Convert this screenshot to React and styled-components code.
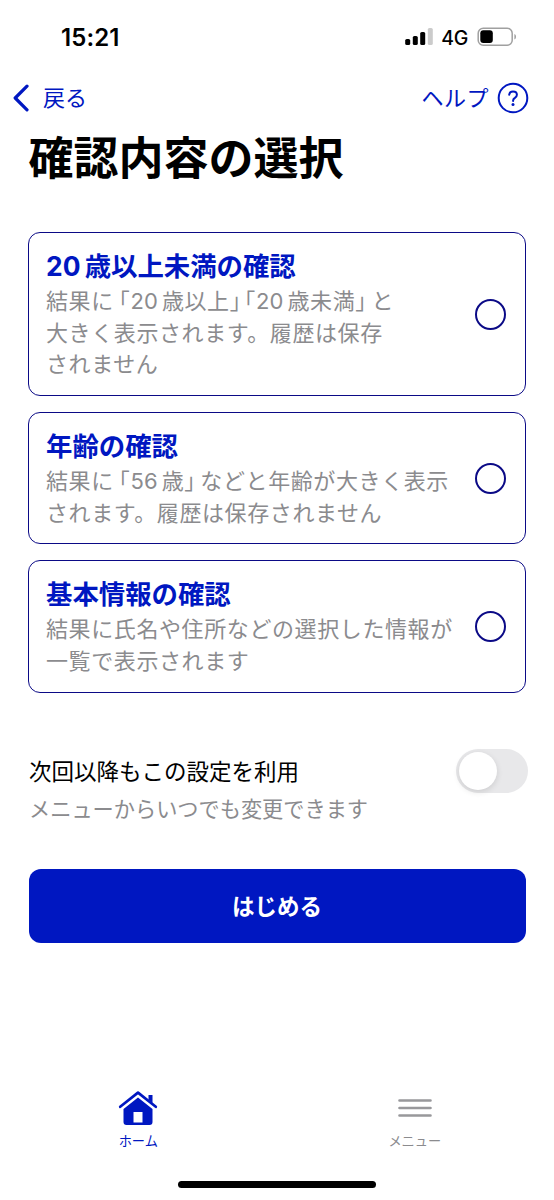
import { useState } from 'react';
import styled, { createGlobalStyle } from 'styled-components';

const colors = {
    primary: '#0017c1',
    navy: '#0b0a86',
    gray: '#8b8b8e',
};

const GlobalStyle = createGlobalStyle`
    * {
        box-sizing: border-box;
    }
    body {
        margin: 0;
        background-color: white;
    }
`;

const Screen = styled.div`
    display: flex;
    flex-direction: column;
    width: 554px;
    height: 1200px;
    overflow: hidden;
    background-color: white;
    color: black;
    font-family: Inter, "Noto Sans CJK JP", sans-serif;
    white-space: nowrap;
`;

const StatusBar = styled.div`
    display: flex;
    align-items: center;
    height: 74px;
    padding: 0 37px 0 61px;
`;

const Clock = styled.div`
    flex-grow: 1;
    font-size: 24px;
    font-weight: 600;
    letter-spacing: 0.1px;
`;

const Network = styled.div`
    margin: 1px 9px 0 8px;
    font-size: 19.5px;
    font-weight: 500;
    letter-spacing: -0.3px;
`;

const NavBar = styled.div`
    display: flex;
    justify-content: space-between;
    height: 48px;
    padding: 0 25px 0 13px;
    color: ${colors.primary};
`;

const NavButton = styled.div`
    display: flex;
    align-items: center;
    gap: ${props => props.$gap}px;
    font-size: 22px;
    line-height: 32px;
    letter-spacing: ${props => props.$spacing || 0}px;
    cursor: pointer;
`;

const Title = styled.h1`
    margin: 0 0 43px;
    padding: 0 28.5px;
    height: 67px;
    font-size: 45px;
    line-height: 74px;
    font-weight: 700;
`;

const CardList = styled.div`
    display: flex;
    flex-direction: column;
    gap: 16px;
    padding: 0 28px;
`;

const Card = styled.div`
    display: flex;
    align-items: center;
    justify-content: space-between;
    height: ${props => props.$lines === 3 ? 164 : 132.4}px;
    padding: 0 19px 0 17px;
    border: 1.5px solid ${colors.navy};
    border-radius: 12px;
    cursor: pointer;
`;

const CardTitle = styled.div`
    height: 39px;
    font-size: 26.4px;
    line-height: 39px;
    font-weight: 700;
    color: ${colors.primary};
`;

const CardLine = styled.div`
    height: 31.7px;
    font-size: 22px;
    line-height: 31.7px;
    letter-spacing: 0.6px;
    font-weight: 400;
    color: ${colors.gray};
`;

const Digits = styled.span`
    margin-right: 4px;
    letter-spacing: 0.1px;
`;

const Bracket = styled.span`
    margin-left: ${props => props.$before || 0}px;
    margin-right: ${props => props.$after || 0}px;
    font-feature-settings: "halt";
`;

const Radio = styled.div`
    flex-shrink: 0;
    width: 31px;
    height: 31px;
    border: 2.5px solid ${colors.navy};
    border-radius: 50%;
    background: ${props => props.$checked ? colors.navy : 'white'};
    box-shadow: inset 0 0 0 4px white;
`;

const SettingRow = styled.div`
    display: flex;
    align-items: flex-start;
    justify-content: space-between;
    margin-top: 56px;
    padding: 0 26px 0 29px;
    height: 120px;
`;

const SettingLabel = styled.div`
    height: 42px;
    font-size: 22.5px;
    line-height: 45px;
`;

const SettingHint = styled.div`
    font-size: 21.2px;
    line-height: 37px;
    color: ${colors.gray};
`;

const Toggle = styled.div`
    display: flex;
    justify-content: ${props => props.$on ? 'flex-end' : 'flex-start'};
    width: 72px;
    height: 44px;
    padding: 3px;
    border-radius: 22px;
    background-color: ${props => props.$on ? colors.primary : '#e8e8ea'};
    cursor: pointer;
`;

const Knob = styled.div`
    width: 38px;
    height: 38px;
    border-radius: 50%;
    background-color: white;
    box-shadow: 0 2px 6px rgba(0, 0, 0, 0.12);
`;

const StartButton = styled.div`
    display: flex;
    align-items: center;
    justify-content: center;
    height: 74px;
    margin: 0 28.5px;
    padding-bottom: 2px;
    border-radius: 12px;
    background-color: ${colors.primary};
    color: white;
    font-size: 22.5px;
    font-weight: 700;
    cursor: pointer;
`;

const TabBar = styled.div`
    display: grid;
    grid-template-columns: 1fr 1fr;
    margin-top: auto;
    height: 94px;
    padding-right: 1px;
`;

const Tab = styled.div`
    display: flex;
    flex-direction: column;
    align-items: center;
    font-size: 13.2px;
    line-height: 20px;
    font-weight: 400;
    color: ${props => props.$active ? colors.primary : colors.gray};
    cursor: pointer;

    svg {
        height: 42px;
        margin-bottom: 2px;
    }
`;

const HomeIndicator = styled.div`
    flex-shrink: 0;
    align-self: center;
    width: 198px;
    height: 7px;
    margin-bottom: 12px;
    border-radius: 4px;
    background-color: black;
`;

const options = [
    {
        title: '20歳以上未満の確認',
        lines: ['結果に「20歳以上」「20歳未満」と', '大きく表示されます。履歴は保存', 'されません'],
    },
    {
        title: '年齢の確認',
        lines: ['結果に「56歳」などと年齢が大きく表示', 'されます。履歴は保存されません'],
    },
    {
        title: '基本情報の確認',
        lines: ['結果に氏名や住所などの選択した情報が', '一覧で表示されます'],
    },
];

// digits and brackets are set narrower than the full-width kana around them
function JpText({ text }) {
    const parts = text.split(/(\d+|[「」])/).filter(Boolean);

    return parts.map((part, idx) => {
        if (/\d/.test(part)) return <Digits key={idx}>{part}</Digits>;
        if (part === '「') return <Bracket key={idx} $before={5}>{part}</Bracket>;
        if (part === '」') return <Bracket key={idx} $after={parts[idx + 1] === '「' ? -2 : 4.5}>{part}</Bracket>;
        return part;
    });
}

function StatusIcons() {
    return (
        <>
            <svg width="28" height="18" viewBox="0 0 28 18">
                <rect x="0.2" y="11" width="5" height="6" rx="1.6" />
                <rect x="7.8" y="8" width="5" height="9" rx="1.6" />
                <rect x="15.2" y="4" width="5" height="13" rx="1.6" />
                <rect x="22.8" y="0" width="5" height="17" rx="1.6" fill="#cbcbcb" />
            </svg>
            <Network>4G</Network>
            <svg width="40" height="20" viewBox="0 0 40 20" fill="none">
                <rect x="1.2" y="1.2" width="34" height="17" rx="5" stroke="#a0a0a0" strokeWidth="1.5" />
                <rect x="3.3" y="3.3" width="12.5" height="12.8" rx="3" fill="black" />
                <path d="M37.4 7V12.4C38.5 12 39 11 39 9.7C39 8.4 38.5 7.4 37.4 7Z" fill="#a0a0a0" />
            </svg>
        </>
    );
}

function OptionCard(props) {
    return (
        <Card $lines={props.lines.length} onClick={props.onClick}>
            <div>
                <CardTitle><JpText text={props.title} /></CardTitle>
                {props.lines.map((line) => <CardLine key={line}><JpText text={line} /></CardLine>)}
            </div>
            <Radio $checked={props.checked} />
        </Card>
    );
}

function App() {
    const [selected, setSelected] = useState(null);
    const [remember, setRemember] = useState(false);

    return (
        <Screen>
            <GlobalStyle />
            <StatusBar>
                <Clock>15:21</Clock>
                <StatusIcons />
            </StatusBar>
            <NavBar>
                <NavButton $gap={14}>
                    <svg width="16" height="28" viewBox="0 0 16 28" fill="none">
                        <path d="M14 2.2L2.2 14L14 25.8" stroke={colors.primary} strokeWidth="3.2" strokeLinecap="round" strokeLinejoin="round" />
                    </svg>
                    戻る
                </NavButton>
                <NavButton $gap={8} $spacing={0.5}>
                    ヘルプ
                    <svg width="32" height="32" viewBox="0 0 32 32" fill="none">
                        <circle cx="16" cy="16" r="14.3" stroke={colors.primary} strokeWidth="2" />
                        <path d="M12.2 12.7C12.4 10.6 13.9 9.4 16 9.4C18.2 9.4 19.9 10.7 19.9 12.7C19.9 14.3 19 15.1 17.9 15.9C16.7 16.7 16.1 17.3 16.1 18.5V19" stroke={colors.primary} strokeWidth="2" strokeLinecap="round" />
                        <circle cx="16" cy="22.4" r="1.5" fill={colors.primary} />
                    </svg>
                </NavButton>
            </NavBar>
            <Title>確認内容の選択</Title>
            <CardList>
                {options.map((option, idx) => (
                    <OptionCard key={option.title} {...option} checked={selected === idx} onClick={() => setSelected(idx)} />
                ))}
            </CardList>
            <SettingRow>
                <div>
                    <SettingLabel>次回以降もこの設定を利用</SettingLabel>
                    <SettingHint>メニューからいつでも変更できます</SettingHint>
                </div>
                <Toggle $on={remember} onClick={() => setRemember(!remember)}>
                    <Knob />
                </Toggle>
            </SettingRow>
            <StartButton>はじめる</StartButton>
            <TabBar>
                <Tab $active>
                    <svg width="40" height="42" viewBox="0 0 40 42" fill="none">
                        <path d="M2.2 19.8L20 5.6L37.8 19.8" stroke={colors.primary} strokeWidth="2.7" strokeLinecap="round" strokeLinejoin="round" />
                        <path d="M30.5 8H34.5V16L30.5 12.8Z" fill={colors.primary} />
                        <path d="M20 10.5L34.5 22V35C34.5 37 33.5 38 31.5 38H8.5C6.5 38 5.5 37 5.5 35V22ZM15.5 25V35.5H24.5V25Z" fill={colors.primary} fillRule="evenodd" />
                    </svg>
                    ホーム
                </Tab>
                <Tab>
                    <svg width="34" height="42" viewBox="0 0 34 42" fill="none">
                        <path d="M1.5 13.5H32.5M1.5 21H32.5M1.5 28.5H32.5" stroke="#98989b" strokeWidth="2.6" strokeLinecap="round" />
                    </svg>
                    メニュー
                </Tab>
            </TabBar>
            <HomeIndicator />
        </Screen>
    );
}

export default App;
